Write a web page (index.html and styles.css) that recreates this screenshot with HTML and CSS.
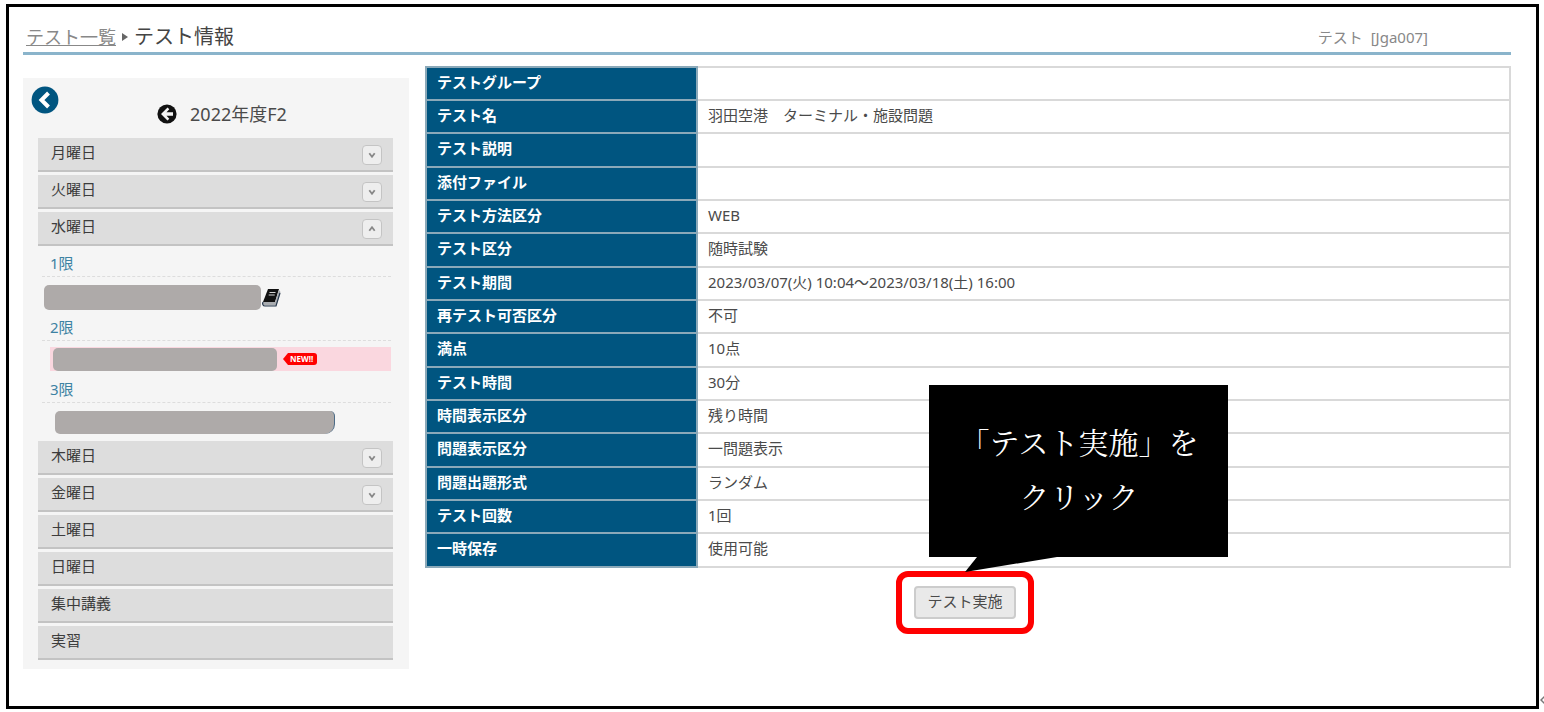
FILE: index.html
```html
<!DOCTYPE html>
<html lang="ja">
<head>
    <meta charset="UTF-8">
    <meta name="viewport" content="width=device-width, initial-scale=1.0">
    <title>テスト情報</title>
    <link rel="stylesheet" href="styles.css">
</head>
<body>
    <div class="frame">
        <header class="page-header">
            <nav class="breadcrumb">
                <a href="#">テスト一覧</a>
                <svg class="crumb-arrow" viewBox="0 0 6 8"><path d="M0 0l6 4-6 4z"/></svg>
                <h1>テスト情報</h1>
            </nav>
            <div class="course-name">テスト&nbsp; [Jga007]</div>
        </header>

        <div class="main">
            <aside class="sidebar">
                <div class="term">
                    <button class="collapse-btn" aria-label="閉じる">
                        <svg viewBox="0 0 28 28">
                            <circle cx="14" cy="14" r="13.4" fill="#005580"/>
                            <path d="M17.500 7l-7 7 7 7" fill="none" stroke="#fff" stroke-width="4"/>
                        </svg>
                    </button>
                    <div class="term-name">
                        <a href="#" class="prev-term" aria-label="前の学期">
                            <svg viewBox="0 0 20 20">
                                <circle cx="10" cy="10" r="9.6" fill="#111"/>
                                <path d="M10.500 3.500L4 10l6.500 6.500 1.800-1.800-2.800-2.900H16V8.200H9.500l2.800-2.900z" fill="#f5f5f5"/>
                            </svg>
                        </a>
                        <span>2022年度F2</span>
                    </div>
                </div>

                <div class="days">
                    <button class="day" aria-expanded="false">月曜日<svg class="toggle" viewBox="0 0 20 20"><path d="M7 8l3 4 3-4"/></svg></button>
                    <button class="day" aria-expanded="false">火曜日<svg class="toggle" viewBox="0 0 20 20"><path d="M7 8l3 4 3-4"/></svg></button>
                    <button class="day" aria-expanded="true">水曜日<svg class="toggle" viewBox="0 0 20 20"><path d="M7 12l3-4 3 4"/></svg></button>
                </div>

                <div class="periods">
                    <h2 class="period">1限</h2>
                    <div class="course first">
                        <span class="mask"></span>
                        <svg class="book" viewBox="0 0 20 20">
                            <path d="M7 1h11l-4 13H2z" fill="#111"/>
                            <path d="M2 14h12l4-12 1.500 2-4 13.500H4c-2 0-3-1.500-2-3.500z" fill="#a9acb0"/>
                            <path d="M2 14c-1 2 0 4 2 4h11l4-13" fill="none" stroke="#27384c" stroke-width="1.200"/>
                            <path d="M8.500 4.500h6M7.700 7h6" stroke="#d5d5d5" stroke-width="1.200"/>
                        </svg>
                    </div>
                    <h2 class="period">2限</h2>
                    <div class="course current">
                        <span class="mask"></span>
                        <span class="new-label">NEW!!</span>
                    </div>
                    <h2 class="period">3限</h2>
                    <div class="course last">
                        <span class="mask"></span>
                    </div>
                </div>

                <div class="days">
                    <button class="day" aria-expanded="false">木曜日<svg class="toggle" viewBox="0 0 20 20"><path d="M7 8l3 4 3-4"/></svg></button>
                    <button class="day" aria-expanded="false">金曜日<svg class="toggle" viewBox="0 0 20 20"><path d="M7 8l3 4 3-4"/></svg></button>
                    <button class="day">土曜日</button>
                    <button class="day">日曜日</button>
                    <button class="day">集中講義</button>
                    <button class="day">実習</button>
                </div>
            </aside>

            <section class="content">
                <table class="info">
                    <tr><th scope="row">テストグループ</th><td></td></tr>
                    <tr><th scope="row">テスト名</th><td>羽田空港　ターミナル・施設問題</td></tr>
                    <tr><th scope="row">テスト説明</th><td></td></tr>
                    <tr><th scope="row">添付ファイル</th><td></td></tr>
                    <tr><th scope="row">テスト方法区分</th><td>WEB</td></tr>
                    <tr><th scope="row">テスト区分</th><td>随時試験</td></tr>
                    <tr><th scope="row">テスト期間</th><td>2023/03/07(火) 10:04～2023/03/18(土) 16:00</td></tr>
                    <tr><th scope="row">再テスト可否区分</th><td>不可</td></tr>
                    <tr><th scope="row">満点</th><td>10点</td></tr>
                    <tr><th scope="row">テスト時間</th><td>30分</td></tr>
                    <tr><th scope="row">時間表示区分</th><td>残り時間</td></tr>
                    <tr><th scope="row">問題表示区分</th><td>一問題表示</td></tr>
                    <tr><th scope="row">問題出題形式</th><td>ランダム</td></tr>
                    <tr><th scope="row">テスト回数</th><td>1回</td></tr>
                    <tr><th scope="row">一時保存</th><td>使用可能</td></tr>
                </table>

                <div class="actions">
                    <div class="highlight">
                        <button class="start-btn">テスト実施</button>
                        <div class="callout">
                            「テスト実施」を<br>クリック
                            <svg class="callout-tail" viewBox="0 0 100 16"><path d="M12 0h80L0 15z"/></svg>
                        </div>
                    </div>
                </div>
            </section>
        </div>
    </div>
    <svg class="return-mark" viewBox="0 0 4 10"><path d="M5 1L1 5l4 4" fill="none" stroke="#777" stroke-width="1.500"/></svg>
</body>
</html>
```
FILE: styles.css
```css
* {
    margin: 0;
    padding: 0;
    box-sizing: border-box;
}

body {
    display: flex;
    align-items: flex-end;
    gap: 1px;
    padding: 4px 0 0 6px;
    overflow: hidden;
    font-family: "Noto Sans", "Noto Sans CJK JP", sans-serif;
    font-size: 15px;
    line-height: 24px;
    background-color: #fff;
    color: #4a4a4a;
}

svg {
    display: block;
}

button {
    font: inherit;
    color: inherit;
    border: none;
    cursor: pointer;
}

.frame {
    flex: 1;
    padding: 0 25px 37px 14px;
    border: 3px solid #000;
}

.page-header {
    display: flex;
    justify-content: space-between;
    align-items: center;
    padding: 18px 83px 3px 3px;
    border-bottom: 3px solid #8ab4cb;
}

.breadcrumb {
    display: flex;
    align-items: center;
    gap: 6px;
}

.breadcrumb a {
    font-size: 18px;
    color: #888;
}

.breadcrumb h1 {
    font-size: 20px;
    font-weight: 400;
    color: #444;
}

.crumb-arrow {
    width: 6px;
    height: 8px;
    fill: #666;
}

.course-name {
    color: #888;
}

.main {
    display: flex;
    align-items: flex-start;
    gap: 16px;
    padding-top: 11px;
}

/* Sidebar */
.sidebar {
    width: 386px;
    margin-top: 12px;
    padding-bottom: 9px;
    background-color: #f5f5f5;
}

.term {
    display: flex;
    align-items: flex-start;
    height: 60px;
    padding: 8px 24px 0 8px;
}

.collapse-btn {
    width: 28px;
    height: 28px;
    background: none;
}

.term-name {
    flex: 1;
    display: flex;
    justify-content: center;
    align-items: center;
    gap: 13px;
    padding-top: 16px;
    font-size: 18px;
}

.prev-term {
    width: 20px;
    height: 20px;
}

.days {
    display: flex;
    flex-direction: column;
    gap: 3px;
    padding: 0 16px 0 15px;
}

.day {
    display: flex;
    justify-content: space-between;
    align-items: flex-start;
    height: 34px;
    padding: 2px 11px 0 13px;
    background-color: #ddd;
    border-bottom: 2px solid #c3c3c3;
    color: #3c3c3c;
}

.toggle {
    width: 20px;
    height: 20px;
    margin-top: 5px;
    background-color: #eee;
    border: 1px solid #c4c4c4;
    border-radius: 4px;
    fill: none;
    stroke: #888;
    stroke-width: 2;
}

.periods {
    padding: 0 18px 0 19px;
}

.period {
    padding: 5px 0 1px 8px;
    border-bottom: 1px dashed #ddd;
    font-size: 15px;
    font-weight: 400;
    color: #3d82a3;
}

.course {
    display: flex;
    align-items: center;
}

.mask {
    height: 23px;
    background-color: #aeaaa9;
    border-radius: 5px;
}

.first {
    padding: 8px 0 0 2px;
}

.first .mask {
    width: 217px;
    height: 25px;
}

.book {
    width: 20px;
    height: 20px;
}

.current {
    height: 24px;
    margin: 6px 0 1px 8px;
    padding-left: 3px;
    background-color: #fad7df;
}

.current .mask {
    width: 224px;
}

.new-label {
    display: flex;
    align-items: center;
    height: 12px;
    margin-left: 6px;
    padding: 0 4px 0 7px;
    background-color: #f00;
    clip-path: polygon(0 50%, 5px 0, 100% 0, 100% 100%, 5px 100%);
    border-radius: 3px;
    font-size: 8px;
    font-weight: 700;
    color: #fff;
}

.last {
    padding: 8px 0 7px 13px;
}

.last .mask {
    width: 280px;
    border-right: 1px solid #4c6b87;
    border-bottom-right-radius: 10px;
}

/* Test information */
.content {
    flex: 1;
}

.info {
    width: 100%;
    border-collapse: collapse;
}

.info tr {
    height: 33px;
}

.info tr:nth-child(3n) {
    height: 34px;
}

.info th,
.info td {
    padding: 0 10px 4px;
    border: 2px solid #d9d9d9;
    text-align: left;
}

.info th {
    width: 271px;
    background-color: #005580;
    border-color: #8ba9b9;
    color: #fff;
}

.actions {
    display: flex;
    justify-content: center;
    padding: 3px 6px 0 0;
}

.highlight {
    position: relative;
    padding: 9px 12px;
    border: 6px solid #f00;
    border-radius: 12px;
}

.start-btn {
    display: block;
    height: 33px;
    padding: 0 11px 4px;
    background-color: #e9e9e9;
    border: 2px solid #ccc;
    border-radius: 4px;
}

.callout {
    position: absolute;
    left: 27px;
    bottom: 71px;
    width: 299px;
    height: 172px;
    padding-top: 29px;
    background-color: #000;
    color: #fff;
    font-family: "Noto Serif CJK JP", "Noto Sans CJK JP", serif;
    font-size: 30px;
    font-weight: 400;
    line-height: 54px;
    text-align: center;
}

.callout-tail {
    position: absolute;
    top: 100%;
    left: 36px;
    width: 100px;
    height: 16px;
}

.return-mark {
    width: 4px;
    height: 10px;
    margin-bottom: 4px;
}
```
